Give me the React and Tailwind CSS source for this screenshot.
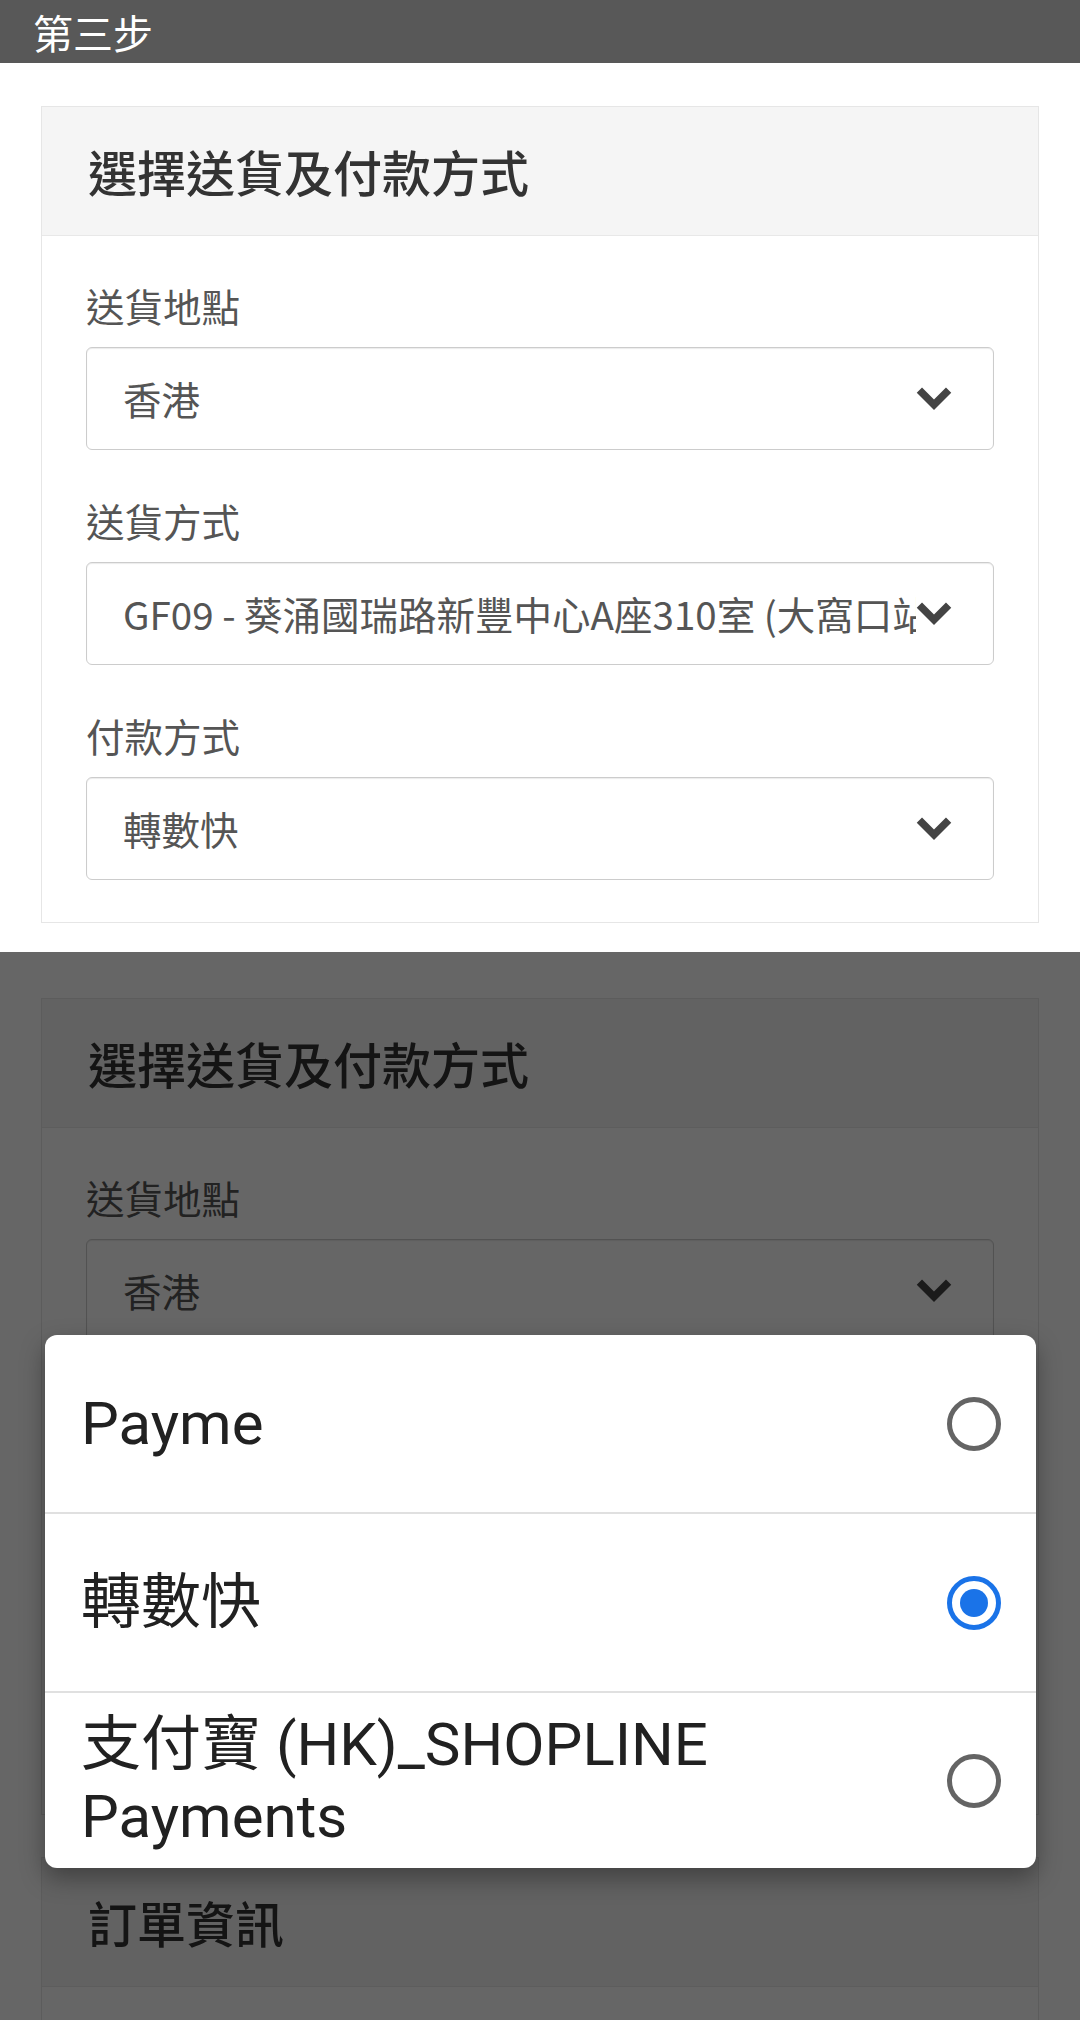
const PAGE_FONT = "font-['Noto_Sans_CJK_TC','Noto_Sans_CJK_SC',sans-serif]";
const DIALOG_FONT = "font-['Roboto','Noto_Sans_CJK_TC',sans-serif]";

const FIELDS = [
  { label: '送貨地點', value: '香港' },
  { label: '送貨方式', value: 'GF09 - 葵涌國瑞路新豐中心A座310室 (大窩口站 C出口)' },
  { label: '付款方式', value: '轉數快' },
];

const PAYMENT_OPTIONS = [
  { name: 'Payme', checked: false, h: 'h-[177px]' },
  { name: '轉數快', checked: true, h: 'h-[179px] border-t-2 border-[#e0e0e0]' },
  { name: '支付寶 (HK)_SHOPLINE Payments', checked: false, h: 'h-[177px] border-t-2 border-[#e0e0e0]' },
];

function Chevron() {
  return (
    <svg className="w-[36px] h-[23px] shrink-0" viewBox="0 0 36 24" fill="#444">
      <polygon points="0,6 5.5,0.5 18,13 30.5,0.5 36,6 18,24" />
    </svg>
  );
}

function SelectBox({ value }) {
  return (
    <div className="flex h-[103px] items-center rounded-[6px] border border-[#cccccc] bg-white pl-[36px] pr-[41px] shadow-[inset_0_1px_1px_rgba(0,0,0,0.08)]">
      <div className="min-w-0 flex-1 overflow-hidden whitespace-nowrap text-[38.5px] text-[#555]">{value}</div>
      <Chevron />
    </div>
  );
}

function CardHeader({ title }) {
  return (
    <div className="flex h-[129px] items-center border-b border-[#e8e8e8] bg-[#f5f5f5] pl-[46px]">
      <h2 className="text-[49px] font-medium text-[#333]">{title}</h2>
    </div>
  );
}

function ShippingCard() {
  return (
    <div className="border border-[#e6e6e6] bg-white">
      <CardHeader title="選擇送貨及付款方式" />
      <div className="flex flex-col gap-[45px] px-[44px] pt-[44px] pb-[42px]">
        {FIELDS.map((f) => (
          <div key={f.label} className="flex flex-col gap-[17px]">
            <label className="h-[50px] text-[38.5px] leading-[50px] text-[#555]">{f.label}</label>
            <SelectBox value={f.value} />
          </div>
        ))}
      </div>
    </div>
  );
}

function Radio({ checked }) {
  return (
    <svg className="w-[54px] h-[54px] shrink-0" viewBox="0 0 54 54">
      <circle cx="27" cy="27" r="24.5" fill="none" stroke={checked ? '#1a73e8' : '#646464'} strokeWidth="5" />
      {checked && <circle cx="27" cy="27" r="14" fill="#1a73e8" />}
    </svg>
  );
}

export default function App() {
  return (
    <div className={`w-[1080px] bg-white ${PAGE_FONT}`}>
      {/* step bar */}
      <div className="flex h-[63px] items-center bg-[#585858] pl-[33px] text-[40px] text-white">第三步</div>

      {/* normal view */}
      <div className="px-[41px] pt-[43px] pb-[29px]">
        <ShippingCard />
      </div>

      {/* same page with the payment dialog open */}
      <div className="relative h-[1068px] overflow-hidden bg-white">
        <div className="flex flex-col gap-[42px] px-[41px] pt-[46px]">
          <ShippingCard />
          <div className="border border-[#e6e6e6] bg-white">
            <CardHeader title="訂單資訊" />
            <div className="h-[200px]" />
          </div>
        </div>

        <div className="absolute inset-0 bg-black/60" />

        <div className={`absolute left-[45px] top-[383px] w-[991px] overflow-hidden rounded-[12px] bg-white shadow-[0_10px_24px_rgba(0,0,0,0.35)] ${DIALOG_FONT}`}>
          {PAYMENT_OPTIONS.map((o) => (
            <div key={o.name} className={`flex items-center pl-[36px] pr-[35px] ${o.h}`}>
              <div className="flex-1 pr-[40px] text-[60px] leading-[72px] text-[#212121]">{o.name}</div>
              <Radio checked={o.checked} />
            </div>
          ))}
        </div>
      </div>
    </div>
  );
}
